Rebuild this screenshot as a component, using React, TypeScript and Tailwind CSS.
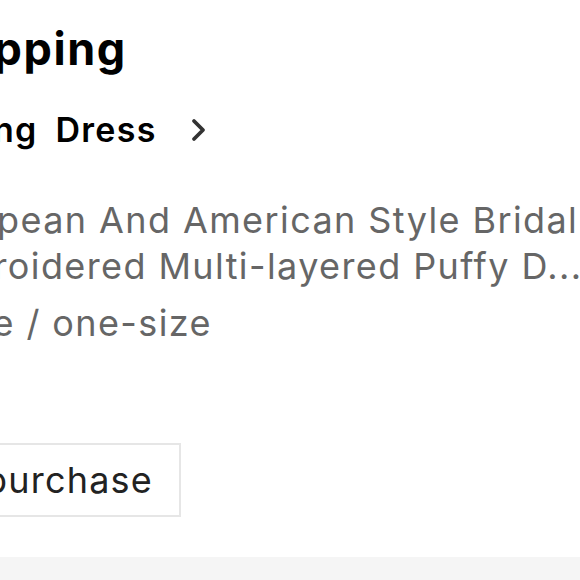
export default function App() {
  return (
    <div className="w-[580px] h-[580px] overflow-hidden bg-white flex flex-col font-['Inter','Liberation_Sans',sans-serif]">
      <div className="flex-1 -ml-[86px] flex flex-col">
        <h1 className="mt-[23px] ml-[5px] text-[45px] leading-[52px] font-bold tracking-[1.6px] text-black whitespace-nowrap">
          Shipping
        </h1>

        <div className="mt-[33px] -ml-[32px] flex items-center gap-[34px] h-[44px] whitespace-nowrap">
          <span className="text-[34px] leading-[44px] font-semibold tracking-[1.3px] [word-spacing:8px] text-black">
            Wedding Dress
          </span>
          <svg width="16" height="24" viewBox="0 0 16 24" fill="none" className="text-[#333]">
            <path d="M3 3l9 9-9 9" stroke="currentColor" strokeWidth="3.8" strokeLinecap="round" strokeLinejoin="round" />
          </svg>
        </div>

        <div className="mt-[45px] text-[36px] leading-[46px] tracking-[1.4px] text-[#666] whitespace-nowrap">
          <div>European And American Style Bridal</div>
          <div>Embroidered Multi-layered Puffy D...</div>
        </div>
        <div className="mt-[11px] -ml-[4px] text-[36px] leading-[46px] tracking-[1.4px] text-[#666] whitespace-nowrap">
          White / one-size
        </div>

        <div className="mt-[97px] -ml-[5px] flex">
          <button className="h-[74px] border-2 border-[#e6e6e6] pl-[28px] pr-[26px] text-[36px] tracking-[1.2px] text-[#222] bg-white">
            Repurchase
          </button>
        </div>
      </div>
      <div className="h-[23px] bg-[#f5f5f5]" />
    </div>
  );
}
